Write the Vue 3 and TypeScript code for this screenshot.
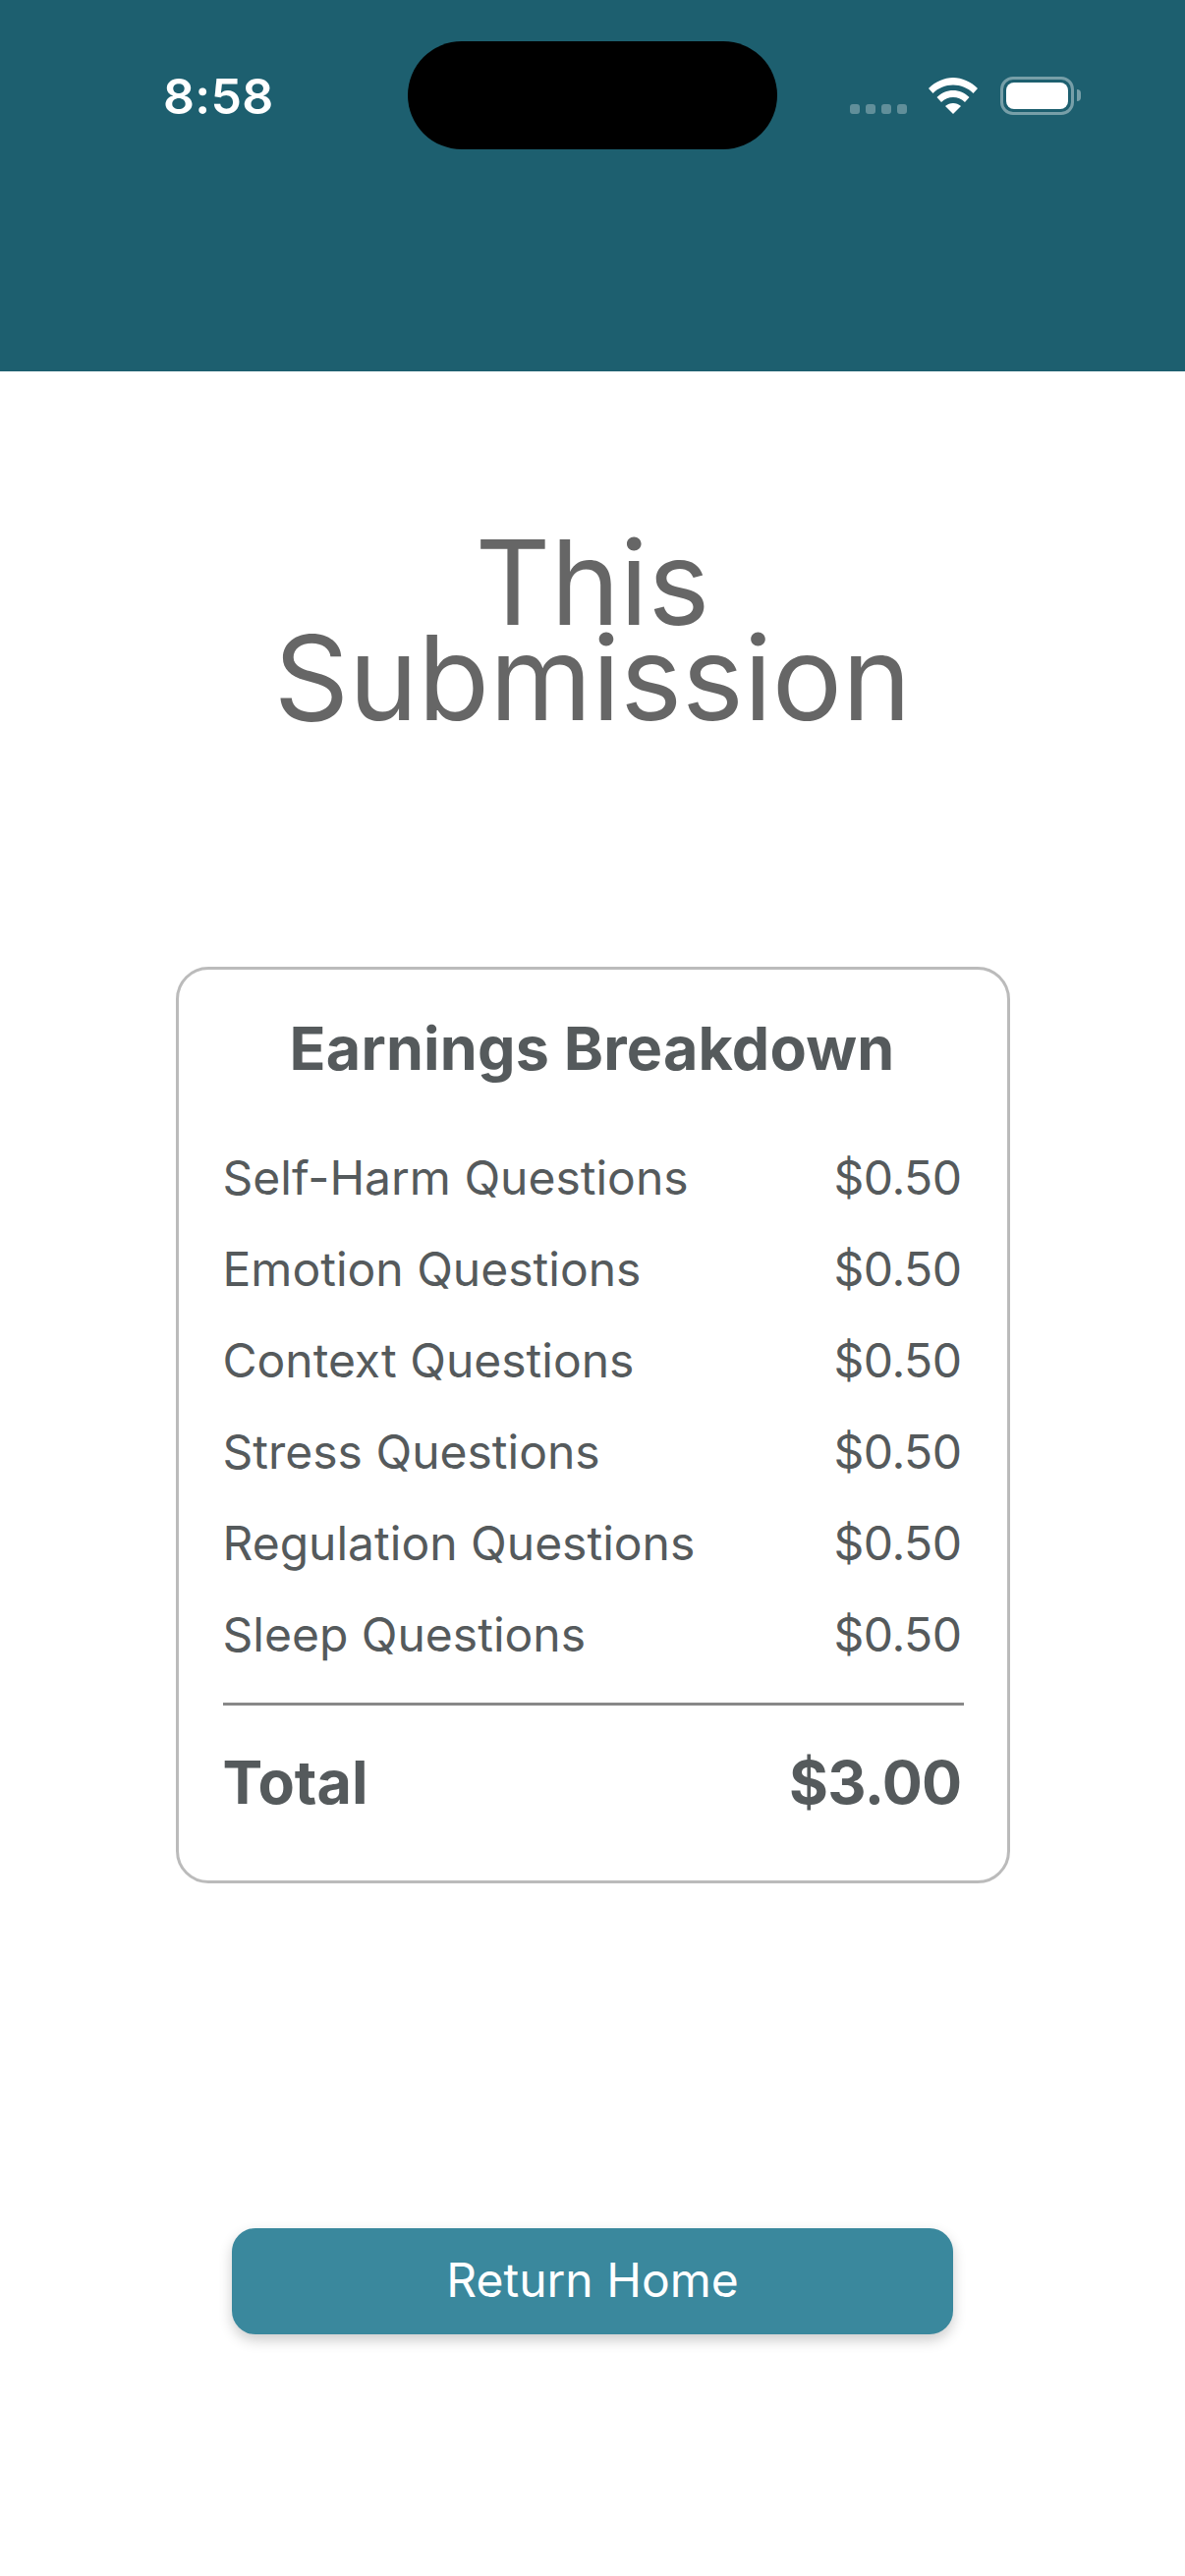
<script setup lang="ts">
interface Row {
  label: string
  amount: string
}

const rows: Row[] = [
  { label: 'Self-Harm Questions', amount: '$0.50' },
  { label: 'Emotion Questions', amount: '$0.50' },
  { label: 'Context Questions', amount: '$0.50' },
  { label: 'Stress Questions', amount: '$0.50' },
  { label: 'Regulation Questions', amount: '$0.50' },
  { label: 'Sleep Questions', amount: '$0.50' },
]
</script>

<template>
  <div class="screen">
    <header class="top">
      <span class="time">8:58</span>
      <div class="island"></div>
      <div class="status">
        <div class="dots">
          <i v-for="n in 4" :key="n"></i>
        </div>
        <svg class="wifi" width="50" height="37" viewBox="0 0 50 37" fill="#fff">
          <path d="M25 0C34 0 43 4 50 11L45.5 16C40 10.5 33 7.5 25 7.5C17 7.5 10 10.5 4.5 16L0 11C7 4 16 0 25 0Z" />
          <path d="M25 13C31 13 37 15.5 41.5 20L37 25C33.5 21.7 29.5 20 25 20C20.5 20 16.5 21.7 13 25L8.5 20C13 15.5 19 13 25 13Z" />
          <path d="M25 26C28 26 30.5 27 33 29L25 37L17 29C19.5 27 22 26 25 26Z" />
        </svg>
        <div class="battery">
          <div class="battery-fill"></div>
        </div>
        <div class="battery-nub"></div>
      </div>
    </header>

    <h1 class="title">This<br />Submission</h1>

    <section class="card">
      <h2 class="card-title">Earnings Breakdown</h2>
      <div v-for="row in rows" :key="row.label" class="row">
        <span>{{ row.label }}</span>
        <span class="amount">{{ row.amount }}</span>
      </div>
      <div class="divider"></div>
      <div class="total">
        <span>Total</span>
        <span class="amount">$3.00</span>
      </div>
    </section>

    <button class="home" type="button">Return Home</button>
  </div>
</template>

<style scoped>
.screen {
  width: 1206px;
  height: 2622px;
  background: #fff;
  font-family: Inter, "Noto Sans", sans-serif;
  display: flex;
  flex-direction: column;
  align-items: center;
  overflow: hidden;
}

.top {
  position: relative;
  width: 100%;
  height: 378px;
  background: #1d5f6f;
  flex-shrink: 0;
}

.time {
  position: absolute;
  left: 166px;
  top: 68px;
  font-size: 50px;
  line-height: 60px;
  font-weight: 600;
  letter-spacing: 0.3px;
  color: #fff;
}

.island {
  position: absolute;
  left: 415px;
  top: 42px;
  width: 376px;
  height: 110px;
  border-radius: 55px;
  background: #000;
}

.status {
  position: absolute;
  left: 865px;
  top: 78px;
  display: flex;
  align-items: flex-start;
}

.dots {
  display: flex;
  gap: 6px;
  margin-top: 28px;
}

.dots i {
  display: block;
  width: 10px;
  height: 10px;
  border-radius: 3px;
  background: rgba(255, 255, 255, 0.3);
}

.wifi {
  margin: 1px 23px 0 22px;
}

.battery {
  box-sizing: border-box;
  width: 75px;
  height: 39px;
  padding: 3px;
  border: 3px solid rgba(255, 255, 255, 0.4);
  border-radius: 13px;
}

.battery-fill {
  height: 100%;
  border-radius: 8px;
  background: #fff;
}

.battery-nub {
  width: 4px;
  height: 12px;
  margin: 13px 0 0 3px;
  border-radius: 0 4px 4px 0;
  background: rgba(255, 255, 255, 0.4);
}

.title {
  margin: 167px 0 0;
  font-size: 119px;
  line-height: 97px;
  font-weight: 400;
  text-align: center;
  color: #666;
}

.card {
  box-sizing: border-box;
  width: 849px;
  height: 933px;
  margin-top: 245px;
  padding: 40px 46px 0 45px;
  border: 3px solid #bbb;
  border-radius: 33px;
  color: #555a5c;
  flex-shrink: 0;
}

.card-title {
  margin: 0 0 45px;
  font-size: 61px;
  line-height: 80px;
  font-weight: 700;
  letter-spacing: 0.2px;
  text-align: center;
}

.row {
  display: flex;
  justify-content: space-between;
  height: 93px;
  font-size: 48px;
  line-height: 93px;
}

.row .amount {
  letter-spacing: -0.5px;
}

.divider {
  height: 3px;
  margin-top: 23px;
  margin-right: -2px;
  background: #888;
}

.total {
  display: flex;
  justify-content: space-between;
  margin-top: 38px;
  font-size: 61px;
  line-height: 80px;
  font-weight: 700;
}

.total .amount {
  letter-spacing: -0.7px;
}

.home {
  width: 734px;
  height: 108px;
  margin-top: 351px;
  padding-bottom: 4px;
  border: none;
  border-radius: 24px;
  background: #3a889d;
  box-shadow: 0 6px 14px rgba(0, 0, 0, 0.2);
  color: #fff;
  font-family: inherit;
  font-size: 48px;
  flex-shrink: 0;
}
</style>
